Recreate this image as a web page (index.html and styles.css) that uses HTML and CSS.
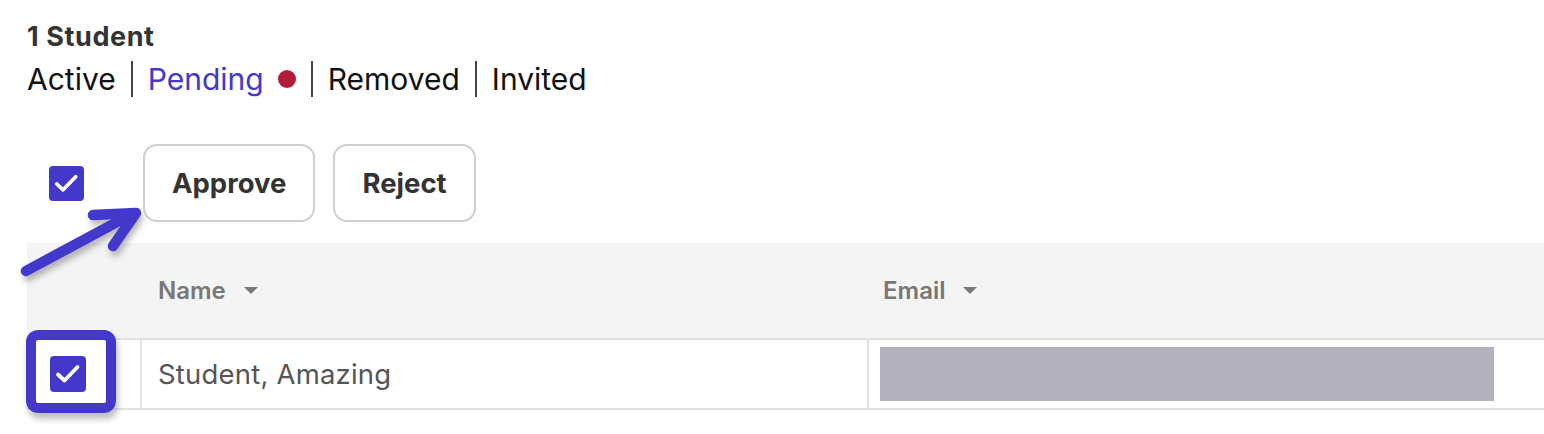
FILE: index.html
```html
<!DOCTYPE html>
<html>
<head>
<meta charset="utf-8">
<link rel="stylesheet" href="styles.css">
</head>
<body>
<div class="page">
  <div class="title">1 Student</div>
  <div class="tabs">
    <span class="tab">Active</span>
    <span class="sep"></span>
    <span class="tab tab-active">Pending <span class="dot"></span></span>
    <span class="sep"></span>
    <span class="tab">Removed</span>
    <span class="sep"></span>
    <span class="tab">Invited</span>
  </div>
  <div class="actions">
    <span class="checkbox checkbox-head">
      <svg viewBox="0 0 36 36" width="35" height="35"><path d="M8 18.5 L14.5 24.5 L27.5 11" fill="none" stroke="#fff" stroke-width="3.8" stroke-linecap="round" stroke-linejoin="round"/></svg>
    </span>
    <button class="btn">Approve</button>
    <button class="btn">Reject</button>
  </div>
  <div class="table">
    <div class="thead">
      <div class="cell cell-check"></div>
      <div class="cell cell-name"><span class="th">Name <span class="caret"></span></span></div>
      <div class="cell cell-email"><span class="th">Email <span class="caret"></span></span></div>
    </div>
    <div class="trow">
      <div class="cell cell-check">
        <span class="checkbox checkbox-row">
          <svg viewBox="0 0 36 36" width="36" height="36"><path d="M8 18.5 L14.5 24.5 L27.5 11" fill="none" stroke="#fff" stroke-width="3.8" stroke-linecap="round" stroke-linejoin="round"/></svg>
        </span>
        <span class="highlight"></span>
      </div>
      <div class="cell cell-name td">Student, Amazing</div>
      <div class="cell cell-email"><span class="redact"></span></div>
    </div>
  </div>
  <svg class="arrow" width="160" height="100" viewBox="0 0 160 100">
    <defs>
      <filter id="sh" x="-20%" y="-20%" width="150%" height="150%">
        <feDropShadow dx="2" dy="5" stdDeviation="3" flood-color="#000" flood-opacity="0.28"/>
      </filter>
    </defs>
    <g filter="url(#sh)" fill="none" stroke="#4237cb" stroke-width="10.5" stroke-linecap="round" stroke-linejoin="round">
      <path d="M26 81 L132 24"/>
      <path d="M93 25 L136 23 L113 56"/>
    </g>
  </svg>
</div>
</body>
</html>
```

FILE: styles.css
```css
* { box-sizing: border-box; }
html, body { margin: 0; padding: 0; background: #fff; }
body { font-family: Inter, "Noto Sans", sans-serif; }
.page { position: relative; padding: 22px 0 0 27px; overflow: hidden; height: 434px; }
.title { font-size: 27px; font-weight: 700; letter-spacing: 0.6px; color: #333; line-height: 30px; }
.tabs { display: flex; align-items: center; margin-top: 7px; height: 40px; font-size: 30px; color: #111; }
.tab { line-height: 40px; white-space: nowrap; }
.tab-active { color: #4338ca; display: flex; align-items: center; gap: 14px; }
.dot { width: 18px; height: 18px; border-radius: 50%; background: #b41b3b; display: inline-block; }
.sep { width: 2px; height: 36px; background: #444; margin: 0 15px; }
.actions { display: flex; align-items: center; margin-top: 45px; height: 78px; }
.checkbox { display: inline-flex; background: #4338ca; border-radius: 4px; }
.checkbox-head { width: 35px; height: 35px; margin-left: 22px; margin-right: 59px; }
.btn { height: 78px; padding: 0 27px; border: 2px solid #cfcfcf; border-radius: 14px; background: #fff; font-family: Inter, sans-serif; font-size: 27.5px; font-weight: 700; color: #333; margin-right: 18px; }
.table { margin-top: 21px; }
.thead { display: flex; height: 97px; background: #f4f4f4; border-bottom: 2px solid #e2e2e2; }
.trow { display: flex; height: 70px; border-bottom: 2px solid #e2e2e2; }
.cell { display: flex; align-items: center; }
.cell-check { width: 113px; flex: none; position: relative; }
.cell-name { width: 727px; flex: none; }
.cell-email { flex: 1; }
.trow .cell-name, .trow .cell-email { border-left: 2px solid #e2e2e2; }
.thead .cell-name { padding-left: 18px; }
.thead .cell-email { padding-left: 16px; }
.trow .cell-name { padding-left: 16px; }
.trow .cell-email { padding-left: 11px; }
.th { font-size: 24px; font-weight: 600; color: #777; display: flex; align-items: center; gap: 18px; }
.caret { width: 0; height: 0; border-left: 7.5px solid transparent; border-right: 7.5px solid transparent; border-top: 7.5px solid #777; }
.td { font-size: 27.5px; letter-spacing: 0.2px; color: #555; }
.checkbox-row { width: 36px; height: 36px; margin-left: 23px; }
.highlight { position: absolute; left: -1px; top: -10px; width: 90px; height: 83px; border: 10px solid #4338ca; border-radius: 12px; box-shadow: 2px 6px 6px rgba(0,0,0,0.25); }
.redact { display: block; width: 614px; height: 54px; background: #b3b1bc; }
.arrow { position: absolute; left: 0; top: 190px; }
```
